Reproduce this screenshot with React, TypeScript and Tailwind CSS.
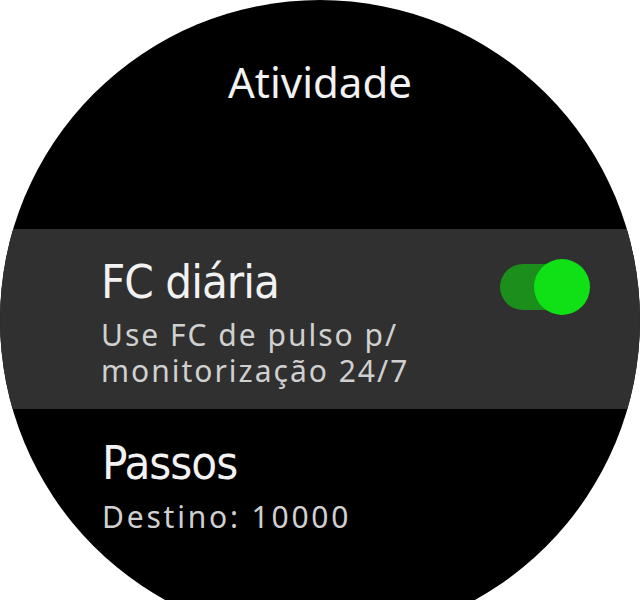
import React from 'react';

// Watch settings screen: round display, one highlighted row with a toggle
function Toggle({ on }: { on: boolean }) {
  return (
    <div className="relative h-[46px] w-[86px] rounded-full bg-[#1b8e1b]">
      <div
        className={`absolute top-[-5px] h-[56px] w-[56px] rounded-full bg-[#10e016] ${on ? 'right-[-4px]' : 'left-[-4px]'}`}
      />
    </div>
  );
}

const titleFont = { fontFamily: '"DejaVu Sans Condensed", "DejaVu Sans", sans-serif' };
const bodyFont = { fontFamily: '"Noto Sans", "DejaVu Sans", sans-serif' };

export default function App() {
  return (
    <div className="h-[600px] w-[640px] overflow-hidden bg-white">
      <div className="h-[640px] w-[640px] overflow-hidden rounded-full bg-black">
        {/* Header */}
        <div
          className="h-[229px] pt-[61px] text-center text-[42px] leading-[42px] text-[#f2f2f2]"
          style={bodyFont}
        >
          Atividade
        </div>

        {/* Daily HR row (selected) */}
        <div className="flex h-[180px] items-start justify-between bg-[#303030] pl-[101px] pr-[54px] pt-[28px]">
          <div className="flex flex-col gap-[10px]">
            <div className="text-[47px] leading-[50px] tracking-[-1px] text-[#f2f2f2]" style={titleFont}>
              FC diária
            </div>
            <div className="text-[30px] leading-[36px] tracking-[2px] text-[#d0d0d0]" style={bodyFont}>
              Use FC de pulso p/
              <br />
              monitorização 24/7
            </div>
          </div>
          <div className="pt-[7px]">
            <Toggle on />
          </div>
        </div>

        {/* Steps row */}
        <div className="flex flex-col gap-[11px] pl-[102px] pt-[29px]">
          <div className="text-[47px] leading-[50px] tracking-[-1px] text-[#f2f2f2]" style={titleFont}>
            Passos
          </div>
          <div className="text-[30px] leading-[36px] tracking-[2.8px] text-[#d0d0d0]" style={bodyFont}>
            Destino: 10000
          </div>
        </div>
      </div>
    </div>
  );
}
